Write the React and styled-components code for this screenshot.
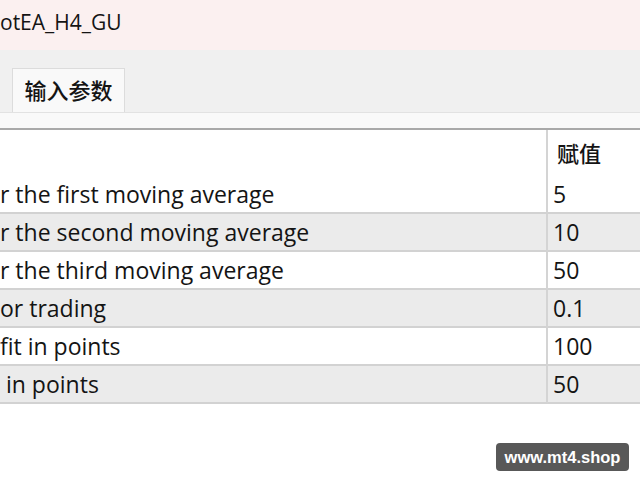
import React from "react";
import styled, { createGlobalStyle } from "styled-components";

const Global = createGlobalStyle`
  html, body { margin: 0; padding: 0; background: #ffffff; }
  body {
    width: 640px; height: 480px; overflow: hidden;
    font-family: "Open Sans", "Noto Sans CJK SC", sans-serif;
    color: #141414;
  }
`;

const Page = styled.div`
  position: relative;
  width: 640px;
  height: 480px;
  background: #ffffff;
`;

const TitleBar = styled.div`
  height: 50px;
  background: #fbf0f0;
  display: flex;
  align-items: center;
  font-size: 21px;
  padding-bottom: 6px;
  box-sizing: border-box;
`;

const TabStrip = styled.div`
  height: 62px;
  background: #f0f0f0;
  display: flex;
  align-items: flex-end;
  padding-left: 12px;
`;

const Tab = styled.div`
  width: 113px;
  height: 44px;
  box-sizing: border-box;
  background: #f9f9f9;
  border: 1px solid #dcdcdc;
  border-bottom: none;
  display: flex;
  align-items: center;
  justify-content: center;
  font-family: "Noto Sans CJK SC", sans-serif;
  font-size: 22px;
  font-weight: 500;
  padding-bottom: 4px;
`;

const Band = styled.div`
  height: 18px;
  box-sizing: border-box;
  background: #f9f9f9;
  border-top: 1px solid #e2e2e2;
  border-bottom: 2px solid #a9a9a9;
`;

const Table = styled.div`
  display: grid;
  grid-template-columns: 548px 1fr;
`;

const Cell = styled.div`
  height: ${(p) => p.$h}px;
  box-sizing: border-box;
  background: ${(p) => (p.$alt ? "#ebebeb" : "#ffffff")};
  border-bottom: ${(p) => (p.$line ? "2px solid #d2d2d2" : "none")};
  border-right: ${(p) => (p.$div ? "2px solid #d4d4d4" : "none")};
  display: flex;
  align-items: center;
  padding-left: ${(p) => p.$pl || 0}px;
  font-size: 23px;
  font-weight: 500;
  white-space: pre;
  overflow: hidden;
`;

const HeadText = styled.span`
  font-family: "Noto Sans CJK SC", sans-serif;
  font-size: 22px;
  font-weight: 500;
  margin-top: -2px;
`;

const Watermark = styled.div`
  position: absolute;
  left: 496px;
  top: 443px;
  width: 133px;
  height: 28px;
  border-radius: 4px;
  background: #585858;
  color: #ffffff;
  font-family: "Liberation Sans", sans-serif;
  font-weight: bold;
  font-size: 16.5px;
  display: flex;
  align-items: center;
  justify-content: center;
`;

const rows = [
  ["r the first moving average", "5"],
  ["r the second moving average", "10"],
  ["r the third moving average", "50"],
  ["or trading", "0.1"],
  ["fit in points", "100"],
  [" in points", "50"],
];

export default function App() {
  return (
    <Page>
      <Global />
      <TitleBar>otEA_H4_GU</TitleBar>
      <TabStrip>
        <Tab>输入参数</Tab>
      </TabStrip>
      <Band />
      <Table>
        <Cell $h={46} $div />
        <Cell $h={46} $pl={9}>
          <HeadText>赋值</HeadText>
        </Cell>
        {rows.map(([name, val], i) => (
          <React.Fragment key={i}>
            <Cell $h={38} $alt={i % 2 === 1} $line $div>
              {name}
            </Cell>
            <Cell $h={38} $alt={i % 2 === 1} $line $pl={5}>
              {val}
            </Cell>
          </React.Fragment>
        ))}
      </Table>
      <Watermark>www.mt4.shop</Watermark>
    </Page>
  );
}
